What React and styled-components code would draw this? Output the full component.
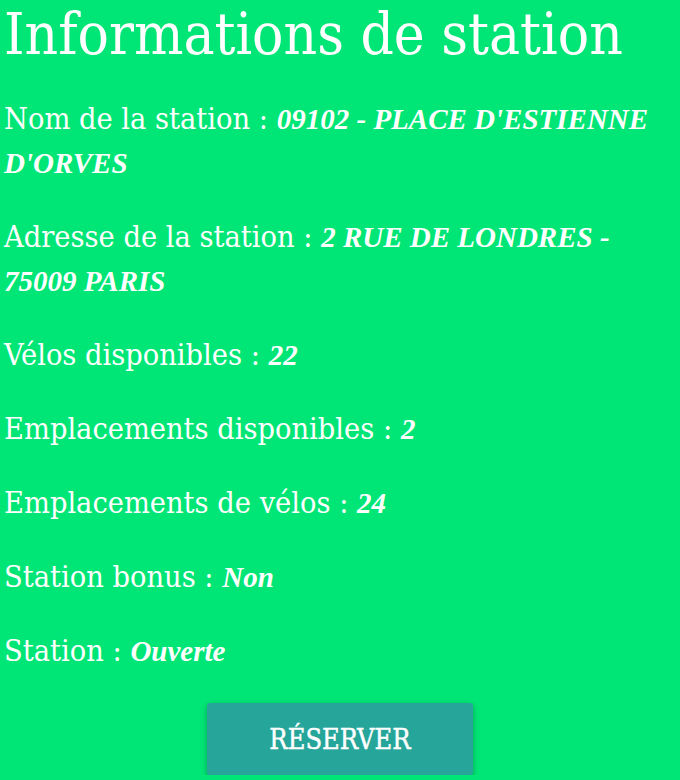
import React from "react";
import styled, { createGlobalStyle } from "styled-components";

const station = [
  { label: "Nom de la station", value: "09102 - PLACE D'ESTIENNE D'ORVES" },
  { label: "Adresse de la station", value: "2 RUE DE LONDRES - 75009 PARIS" },
  { label: "Vélos disponibles", value: "22" },
  { label: "Emplacements disponibles", value: "2" },
  { label: "Emplacements de vélos", value: "24" },
  { label: "Station bonus", value: "Non" },
  { label: "Station", value: "Ouverte" },
];

export default function App() {
  return (
    <>
      <GlobalStyle />
      <Panel>
        <Title>Informations de station</Title>
        {station.map(({ label, value }) => (
          <Info key={label}>
            {label} : <Value>{value}</Value>
          </Info>
        ))}
        <Actions>
          <Button type="button">Réserver</Button>
        </Actions>
      </Panel>
    </>
  );
}

const GlobalStyle = createGlobalStyle`
  html, body {
    margin: 0;
    background: #00e676;
  }
  body {
    font-family: "DejaVu Serif Condensed", "DejaVu Serif", serif;
    color: #fff;
  }
`;

const Panel = styled.div`
  display: flex;
  flex-direction: column;
  padding: 0 4px;
`;

const Title = styled.h1`
  margin: 0 0 29px 0;
  font-size: 58px;
  font-weight: normal;
  line-height: 68px;
`;

const Info = styled.p`
  margin: 0 0 30px 0;
  font-size: 30.4px;
  line-height: 44px;
`;

const Value = styled.em`
  font-family: "Liberation Serif", serif;
  font-size: 29px;
  font-weight: bold;
  font-style: italic;
`;

const Actions = styled.div`
  display: flex;
  justify-content: center;
`;

const Button = styled.button`
  width: 266px;
  height: 72px;
  border: none;
  border-radius: 3px;
  background: #26a69a;
  color: #fff;
  font-family: "DejaVu Serif Condensed", "DejaVu Serif", serif;
  font-size: 27px;
  text-transform: uppercase;
  -webkit-text-stroke: 0.4px #fff;
  box-shadow: 0 2px 5px rgba(0, 0, 0, 0.22), 0 2px 10px rgba(0, 0, 0, 0.1);
  cursor: pointer;
`;
